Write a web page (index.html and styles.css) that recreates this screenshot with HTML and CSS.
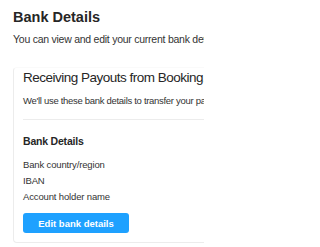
FILE: index.html
```html
<!DOCTYPE html>
<html>
<head>
<meta charset="utf-8">
<link rel="stylesheet" href="styles.css">
</head>
<body>
<div class="page">
  <h1 class="title">Bank Details</h1>
  <p class="intro">You can view and edit your current bank details here.</p>
  <section class="card">
    <h2 class="card-title">Receiving Payouts from Booking.com</h2>
    <p class="card-desc">We'll use these bank details to transfer your payouts.</p>
    <div class="divider"></div>
    <h3 class="sub-title">Bank Details</h3>
    <ul class="fields">
      <li>Bank country/region</li>
      <li>IBAN</li>
      <li>Account holder name</li>
    </ul>
    <button class="btn">Edit bank details</button>
  </section>
</div>
</body>
</html>
```

FILE: styles.css
```css
html, body {
  margin: 0;
  padding: 0;
  background: #fff;
}
.page {
  width: 204px;
  height: 247px;
  box-sizing: border-box;
  overflow: hidden;
  padding: 9px 0 0 13px;
  font-family: "Liberation Sans", Arial, sans-serif;
  color: #262626;
  white-space: nowrap;
}
.title {
  margin: 0;
  font-size: 14.5px;
  line-height: 17px;
  font-weight: bold;
}
.intro {
  margin: 6px 0 0 0;
  font-size: 10.5px;
  line-height: 14px;
  letter-spacing: -0.25px;
  color: #333;
}
.card {
  width: 300px;
  margin-top: 21px;
  border: 1px solid #ececec;
  border-top-color: #fafafa;
  border-radius: 4px;
  padding: 1px 0 9px 9px;
}
.card-title {
  margin: 0;
  font-size: 13.5px;
  line-height: 18px;
  letter-spacing: -0.5px;
  font-weight: normal;
  color: #262626;
}
.card-desc {
  margin: 8px 0 0 0;
  font-size: 9.5px;
  line-height: 12px;
  letter-spacing: -0.3px;
  color: #333;
}
.divider {
  margin-top: 12px;
  height: 1px;
  background: #ececec;
}
.sub-title {
  margin: 15px 0 0 0;
  font-size: 10.5px;
  line-height: 13px;
  letter-spacing: -0.2px;
  font-weight: bold;
}
.fields {
  list-style: none;
  margin: 9px 0 0 0;
  padding: 0;
  font-size: 9.5px;
  line-height: 16px;
  letter-spacing: -0.15px;
  color: #333;
}
.btn {
  display: block;
  margin-top: 8px;
  width: 106px;
  height: 20px;
  border: none;
  border-radius: 3px;
  background: #1ea1ff;
  color: #fff;
  font-family: "Liberation Sans", Arial, sans-serif;
  font-size: 9.5px;
  font-weight: bold;
  padding: 0;
}
```
